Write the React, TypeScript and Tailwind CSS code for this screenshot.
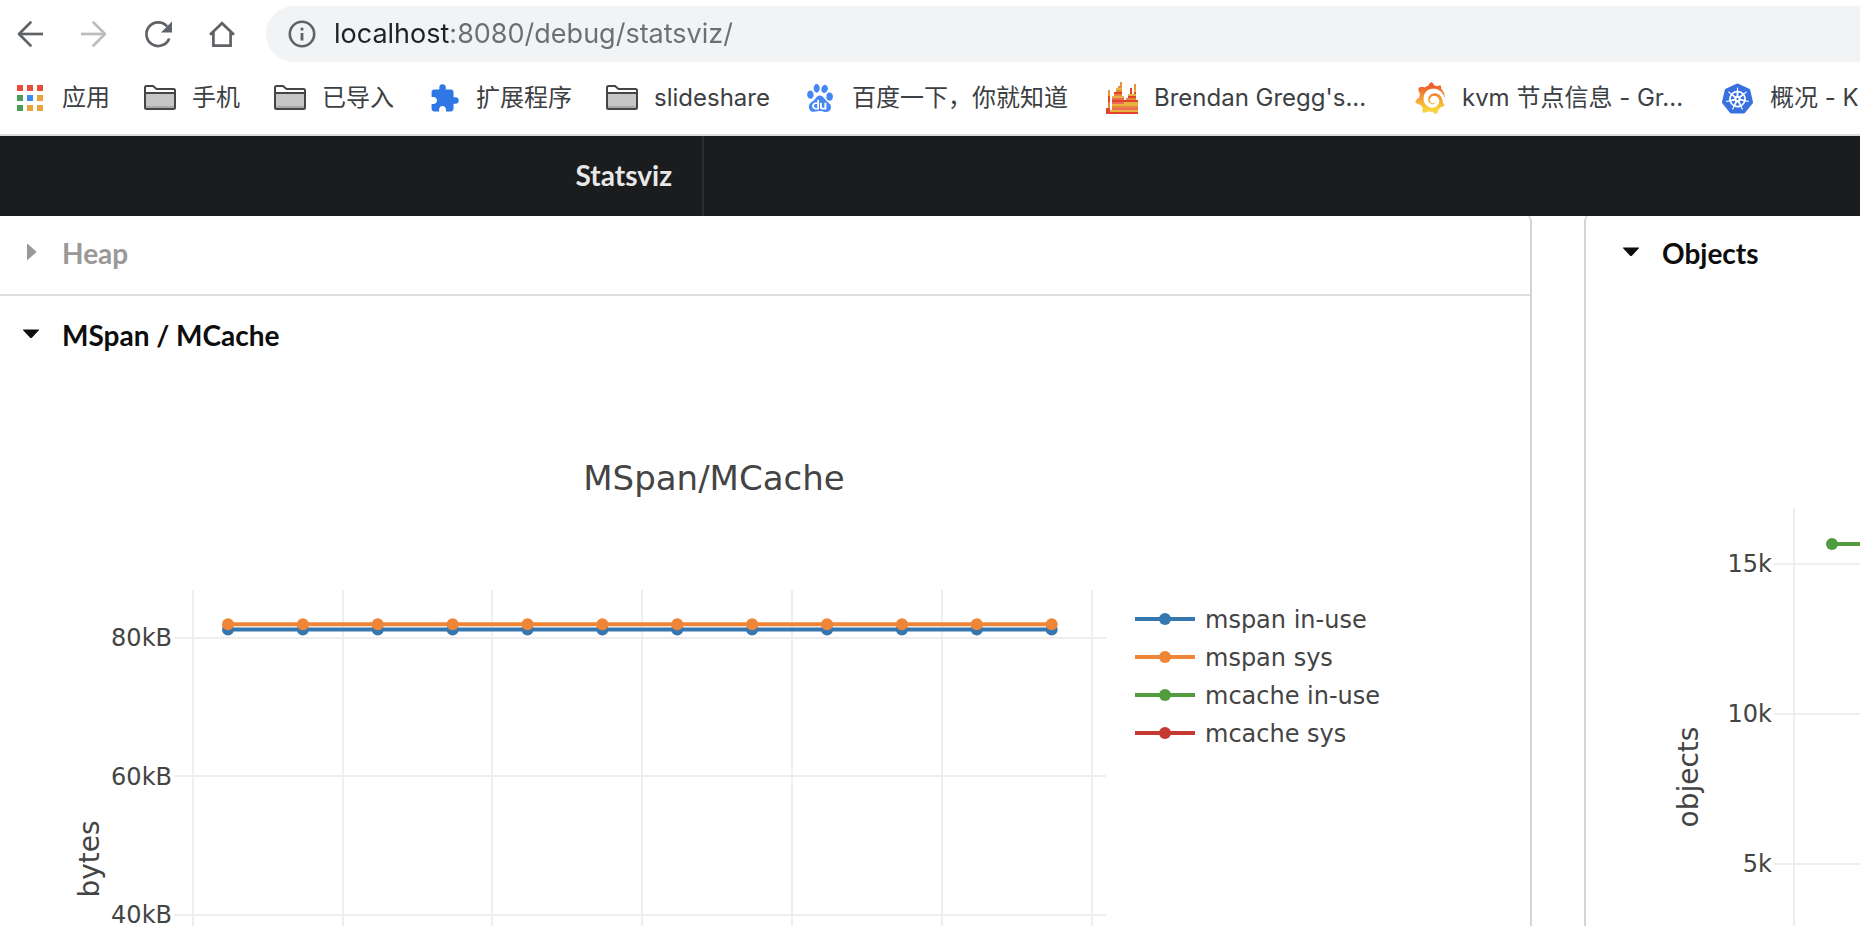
import { useState, type ReactNode } from "react";
import { MdExtension } from "react-icons/md";
import { SiBaidu, SiGrafana, SiKubernetes } from "react-icons/si";

const GRID = "#eeeeee";
const INK = "#444444";

const range = (n: number) => Array.from({ length: n }, (_, i) => i);

function BackIcon() {
  return (
    <svg width="32" height="32" viewBox="0 0 32 32" fill="none" stroke="currentColor" strokeWidth="2.7">
      <path d="M29 16H5" />
      <path d="M16.5 4.5 5 16l11.5 11.5" strokeLinecap="round" strokeLinejoin="round" />
    </svg>
  );
}

function ForwardIcon() {
  return (
    <svg width="32" height="32" viewBox="0 0 32 32" fill="none" stroke="currentColor" strokeWidth="2.7">
      <path d="M3 16h24" />
      <path d="M15.5 4.5 27 16 15.5 27.5" strokeLinecap="round" strokeLinejoin="round" />
    </svg>
  );
}

function ReloadIcon() {
  return (
    <svg width="32" height="32" viewBox="0 0 32 32" fill="none">
      <path d="M27.2 20.5A11.8 11.8 0 1 1 25 8.3" stroke="currentColor" strokeWidth="2.7" />
      <path d="M30 3.5v11H19z" fill="currentColor" />
    </svg>
  );
}

function HomeIcon() {
  return (
    <svg width="32" height="32" viewBox="0 0 32 32" fill="none" stroke="currentColor" strokeWidth="2.7">
      <path d="M4 16.8 16 5.2l12 11.6" />
      <path d="M7.4 14v13.7h17.2V14" />
    </svg>
  );
}

function InfoIcon() {
  return (
    <svg width="28" height="28" viewBox="0 0 28 28" fill="none">
      <circle cx="14" cy="14" r="12.2" stroke="currentColor" strokeWidth="2.6" />
      <path d="M12.6 13h2.8v7.5h-2.8zM12.6 7.7h2.8v2.8h-2.8z" fill="currentColor" />
    </svg>
  );
}

function AppsIcon() {
  const colors = [
    "#e94b3c", "#e94b3c", "#e94b3c",
    "#4f9b5b", "#3b8cf0", "#e8a33a",
    "#4f9b5b", "#e8a33a", "#e8a33a",
  ];
  return (
    <svg width="26" height="26" viewBox="0 0 26 26">
      {colors.map((fill, i) => (
        <rect key={i} x={(i % 3) * 10} y={Math.floor(i / 3) * 10} width="6" height="6" fill={fill} />
      ))}
    </svg>
  );
}

function FolderIcon() {
  return (
    <svg width="32" height="26" viewBox="0 0 32 26">
      <path d="M1 9h30v15H1z" fill="#c6c6c6" />
      <path d="M1 21h30v3H1z" fill="#a8a8a8" />
      <path
        d="M1 22.5V2.5Q1 1 2.5 1H9l3.5 3H29.5Q31 4 31 5.5v17Q31 24 29.5 24h-27Q1 24 1 22.5zM1 8h30"
        fill="none"
        stroke="#454545"
        strokeWidth="2"
      />
    </svg>
  );
}

// [row, first cell, cell count, colour]
const flames: [number, number, number, string][] = [
  [0, 7, 1, "#e8923f"],
  [1, 7, 1, "#e8923f"], [1, 14, 1, "#e8923f"],
  [2, 6, 2, "#e8873a"], [2, 14, 1, "#e8923f"],
  [3, 5, 3, "#e8b23e"], [3, 12, 1, "#e0452a"], [3, 14, 1, "#e8923f"],
  [4, 1, 1, "#e8923f"], [4, 5, 3, "#e8873a"], [4, 12, 1, "#e0452a"], [4, 14, 1, "#e8b23e"],
  [5, 1, 1, "#e8923f"], [5, 4, 4, "#e0452a"], [5, 12, 1, "#e0452a"], [5, 14, 1, "#e0452a"],
  [6, 1, 1, "#e8923f"], [6, 4, 4, "#e8873a"], [6, 11, 4, "#e8b23e"],
  [7, 1, 1, "#e0452a"], [7, 3, 6, "#e8b23e"], [7, 11, 4, "#e0452a"],
  [8, 1, 1, "#e0452a"], [8, 3, 6, "#ed6a5a"], [8, 10, 5, "#e8873a"],
  [9, 1, 1, "#e0452a"], [9, 3, 13, "#e0452a"],
  [10, 1, 1, "#e8873a"], [10, 3, 6, "#ed6a5a"], [10, 9, 7, "#e8b23e"],
  [11, 1, 1, "#e8873a"], [11, 3, 13, "#e8b23e"],
  [12, 1, 1, "#e8873a"], [12, 3, 13, "#e8873a"],
  [13, 0, 2, "#e0452a"], [13, 3, 13, "#ed6a5a"],
  [14, 0, 2, "#e0452a"], [14, 2, 14, "#e8b23e"],
  [15, 0, 16, "#e0452a"],
];

function FlameIcon() {
  return (
    <svg width="32" height="32" viewBox="0 0 16 16" shapeRendering="crispEdges">
      {flames.map(([y, x, w, fill], i) => (
        <rect key={i} x={x} y={y} width={w} height="1" fill={fill} />
      ))}
    </svg>
  );
}

function GrafanaIcon() {
  return (
    <>
      <svg width="0" height="0" className="absolute">
        <linearGradient id="grafana" x1="0" y1="0" x2="0" y2="1">
          <stop offset="0.1" stopColor="#ee5a2c" />
          <stop offset="0.85" stopColor="#fad03c" />
        </linearGradient>
      </svg>
      <SiGrafana size={32} fill="url(#grafana)" />
    </>
  );
}

type Bookmark = { label: string; icon: ReactNode; width?: string };

const bookmarks: Bookmark[] = [
  { label: "应用", icon: <AppsIcon /> },
  { label: "手机", icon: <FolderIcon /> },
  { label: "已导入", icon: <FolderIcon /> },
  { label: "扩展程序", icon: <MdExtension size={31} color="#2f77e4" /> },
  { label: "slideshare", icon: <FolderIcon /> },
  { label: "百度一下，你就知道", icon: <SiBaidu size={28} color="#4588f5" />, width: "w-[220px]" },
  { label: "Brendan Gregg's...", icon: <FlameIcon />, width: "w-[226px]" },
  { label: "kvm 节点信息 - Gr...", icon: <GrafanaIcon />, width: "w-[226px]" },
  { label: "概况 - K", icon: <SiKubernetes size={31} color="#3970e0" /> },
];

function Browser() {
  const [url, setUrl] = useState("localhost:8080/debug/statsviz/");

  return (
    <div className="border-b-2 border-[#dadcdf] bg-white">
      <div className="flex items-center gap-8 pt-1.5 pl-3.5 text-[#5f6368]">
        <button aria-label="Back"><BackIcon /></button>
        <button aria-label="Forward" className="text-[#bcbcbc]"><ForwardIcon /></button>
        <button aria-label="Reload"><ReloadIcon /></button>
        <button aria-label="Home"><HomeIcon /></button>
        <div className="-ml-1 flex h-14 flex-1 items-center gap-[18px] rounded-l-full bg-[#f1f3f4] pl-[22px]">
          <InfoIcon />
          {/* host is darker than the rest of the address */}
          <input
            aria-label="Address"
            value={url}
            onChange={(e) => setUrl(e.target.value)}
            className="h-10 min-w-0 flex-1 bg-[linear-gradient(to_right,#202124_115px,#6b6e72_115px)] bg-clip-text font-[Inter,sans-serif] text-[27px] text-transparent outline-none"
          />
        </div>
      </div>
      <nav className="flex h-[72px] items-center gap-[34px] overflow-hidden pl-3.5">
        {bookmarks.map((b) => (
          <a key={b.label} href="#" className="flex shrink-0 items-center gap-4">
            <span className="flex w-8 justify-center">{b.icon}</span>
            <span
              className={`whitespace-nowrap font-[Inter,'Noto_Sans_CJK_SC',sans-serif] text-2xl text-[#3c4043] ${b.width ?? ""}`}
            >
              {b.label}
            </span>
          </a>
        ))}
      </nav>
    </div>
  );
}

function PanelTitle({ text, open }: { text: string; open?: boolean }) {
  return (
    <button
      aria-expanded={!!open}
      className={`flex h-20 w-full items-center pb-0.5 font-[Lato,sans-serif] text-[28px] font-bold ${open ? "text-[#0d0d0d]" : "text-[#999999]"}`}
    >
      <span className="flex w-[62px] justify-center">
        <svg width="18" height="18" viewBox="0 0 18 18" fill="currentColor">
          {open ? (
            <path d="M1.5 3.5h15q1 0 .4.8l-7 7.4q-.9.8-1.8 0l-7-7.4q-.6-.8.4-.8z" />
          ) : (
            <path d="M5 .5q0-1 .8-.4l8 7q.8.8 0 1.6l-8 7q-.8.6-.8-.4z" />
          )}
        </svg>
      </span>
      {text}
    </button>
  );
}

function Series({ y, color }: { y: number; color: string }) {
  return (
    <g fill={color} stroke="none">
      <path d={`M228 ${y}H1052`} stroke={color} strokeWidth="4" />
      {range(12).map((i) => (
        <circle key={i} cx={228 + i * 74.88} cy={y} r="6" />
      ))}
    </g>
  );
}

const legend = [
  { name: "mspan in-use", color: "#3777b0" },
  { name: "mspan sys", color: "#ef8536" },
  { name: "mcache in-use", color: "#519d3e" },
  { name: "mcache sys", color: "#c53932" },
];

function MSpanChart() {
  return (
    <svg
      width="1430"
      height="640"
      className="block font-[Verdana,'DejaVu_Sans',sans-serif] text-2xl"
      fill={INK}
    >
      <text x="714" y="114" textAnchor="middle" className="text-[34px]">MSpan/MCache</text>
      <g stroke={GRID} strokeWidth="2">
        {[193, 343, 492, 642, 792, 942, 1092].map((x) => (
          <path key={x} d={`M${x} 214V640`} />
        ))}
        {[262, 400, 539].map((y) => (
          <path key={y} d={`M174 ${y}H1106`} />
        ))}
      </g>
      <g textAnchor="end">
        <text x="172" y="270">80kB</text>
        <text x="172" y="409">60kB</text>
        <text x="172" y="547">40kB</text>
      </g>
      <text transform="translate(99 483) rotate(-90)" textAnchor="middle" className="text-[28px]">bytes</text>
      <Series y={253.5} color="#3777b0" />
      <Series y={248.3} color="#ef8536" />
      {legend.map((l, i) => (
        <g key={l.name}>
          <path d={`M1135 ${243 + i * 38}h60`} stroke={l.color} strokeWidth="4" />
          <circle cx="1165" cy={243 + i * 38} r="6" fill={l.color} />
          <text x="1205" y={252 + i * 38}>{l.name}</text>
        </g>
      ))}
    </svg>
  );
}

function ObjectsChart() {
  return (
    <svg
      width="1430"
      height="640"
      className="block font-[Verdana,'DejaVu_Sans',sans-serif] text-2xl"
      fill={INK}
    >
      <g stroke={GRID} strokeWidth="2">
        <path d="M208 214V640" />
        {[270, 420, 570].map((y) => (
          <path key={y} d={`M188 ${y}H1120`} />
        ))}
      </g>
      <g textAnchor="end">
        <text x="186" y="278">15k</text>
        <text x="186" y="428">10k</text>
        <text x="186" y="578">5k</text>
      </g>
      <text transform="translate(112 483) rotate(-90)" textAnchor="middle" className="text-[28px]">objects</text>
      <path d="M246 250H1070" stroke="#519d3e" strokeWidth="4" />
      <circle cx="246" cy="250" r="6" fill="#519d3e" />
    </svg>
  );
}

export default function App() {
  return (
    <div className="flex h-screen flex-col overflow-hidden bg-white">
      <Browser />
      <header className="relative z-10 grid h-20 shrink-0 grid-cols-[704fr_1156fr] bg-[#1b1c1d]">
        <a
          href="#"
          className="flex items-center justify-end border-r-2 border-[#2d2e2f] pr-[30px] pb-0.5 font-[Lato,sans-serif] text-[28px] font-bold text-[#e8e8e8]"
        >
          Statsviz
        </a>
      </header>
      <main className="-mt-0.5 grid min-h-0 flex-1 grid-cols-[minmax(0,1532fr)_minmax(0,276fr)] gap-[52px]">
        <section className="overflow-hidden rounded-tr-lg border-r-2 border-[#d4d4d5]">
          <PanelTitle text="Heap" />
          <div className="border-t-2 border-[#dedede]">
            <PanelTitle text="MSpan / MCache" open />
            <MSpanChart />
          </div>
        </section>
        <section className="overflow-hidden rounded-tl-lg border-l-2 border-[#d4d4d5]">
          <div className="pl-3.5">
            <PanelTitle text="Objects" open />
          </div>
          <ObjectsChart />
        </section>
      </main>
    </div>
  );
}
